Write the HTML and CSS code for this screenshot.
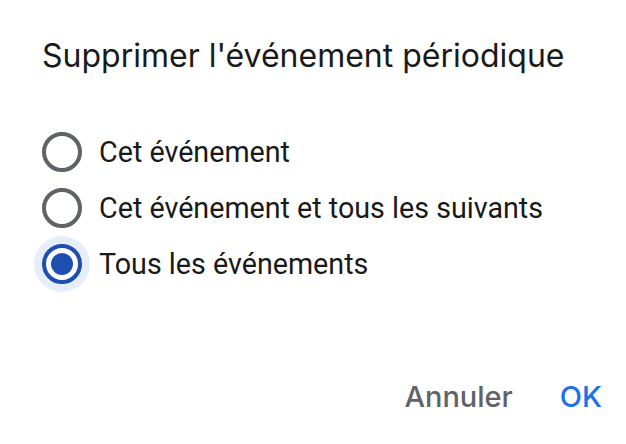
FILE: index.html
```html
<!DOCTYPE html>
<html lang="fr">
<head>
    <meta charset="UTF-8">
    <meta name="viewport" content="width=device-width, initial-scale=1.0">
    <title>Supprimer l'événement périodique</title>
    <link rel="stylesheet" href="styles.css">
</head>
<body>
    <div class="dialog">
        <h1 class="dialog-title">Supprimer l'événement périodique</h1>

        <div class="options">
            <label class="option">
                <span class="radio"></span>
                <span class="option-label">Cet événement</span>
            </label>
            <label class="option">
                <span class="radio"></span>
                <span class="option-label">Cet événement et tous les suivants</span>
            </label>
            <label class="option selected">
                <span class="radio"></span>
                <span class="option-label">Tous les événements</span>
            </label>
        </div>

        <div class="actions">
            <button class="btn btn-cancel">Annuler</button>
            <button class="btn btn-ok">OK</button>
        </div>
    </div>
</body>
</html>
```

FILE: styles.css
```css
* {
    margin: 0;
    padding: 0;
    box-sizing: border-box;
}

body {
    background: #fff;
    font-family: Roboto, "Liberation Sans", sans-serif;
    color: #202124;
}

.dialog {
    width: 626px;
    height: 444px;
    padding: 36px 24px 0 42px;
    display: flex;
    flex-direction: column;
}

.dialog-title {
    font-family: Inter, "Open Sans", sans-serif;
    font-weight: 400;
    font-size: 32px;
    line-height: 40px;
    color: #1a1a1a;
    white-space: nowrap;
}

.options {
    margin-top: 48px;
    display: flex;
    flex-direction: column;
}

.option {
    height: 56px;
    display: flex;
    align-items: center;
    gap: 17px;
}

.radio {
    position: relative;
    width: 40px;
    height: 40px;
    border: 4px solid #5f6368;
    border-radius: 50%;
    flex-shrink: 0;
}

.option.selected .radio {
    border-color: #1f4fae;
    box-shadow: 0 0 0 8px #e6eefb;
    background: #fff;
}

.option.selected .radio::after {
    content: "";
    position: absolute;
    top: 5px;
    left: 5px;
    width: 22px;
    height: 22px;
    border-radius: 50%;
    background: #1f4fae;
}

.option-label {
    font-size: 28.7px;
    color: #1a1a1a;
}

.actions {
    margin-top: auto;
    margin-bottom: 31px;
    display: flex;
    justify-content: flex-end;
    align-items: center;
    gap: 47px;
}

.btn {
    border: none;
    background: none;
    font-family: Inter, "Open Sans", sans-serif;
    font-size: 29px;
    line-height: 32px;
    font-weight: 500;
    cursor: pointer;
}

.btn-cancel {
    color: #5f6368;
}

.btn-ok {
    color: #1a73e8;
}
```
